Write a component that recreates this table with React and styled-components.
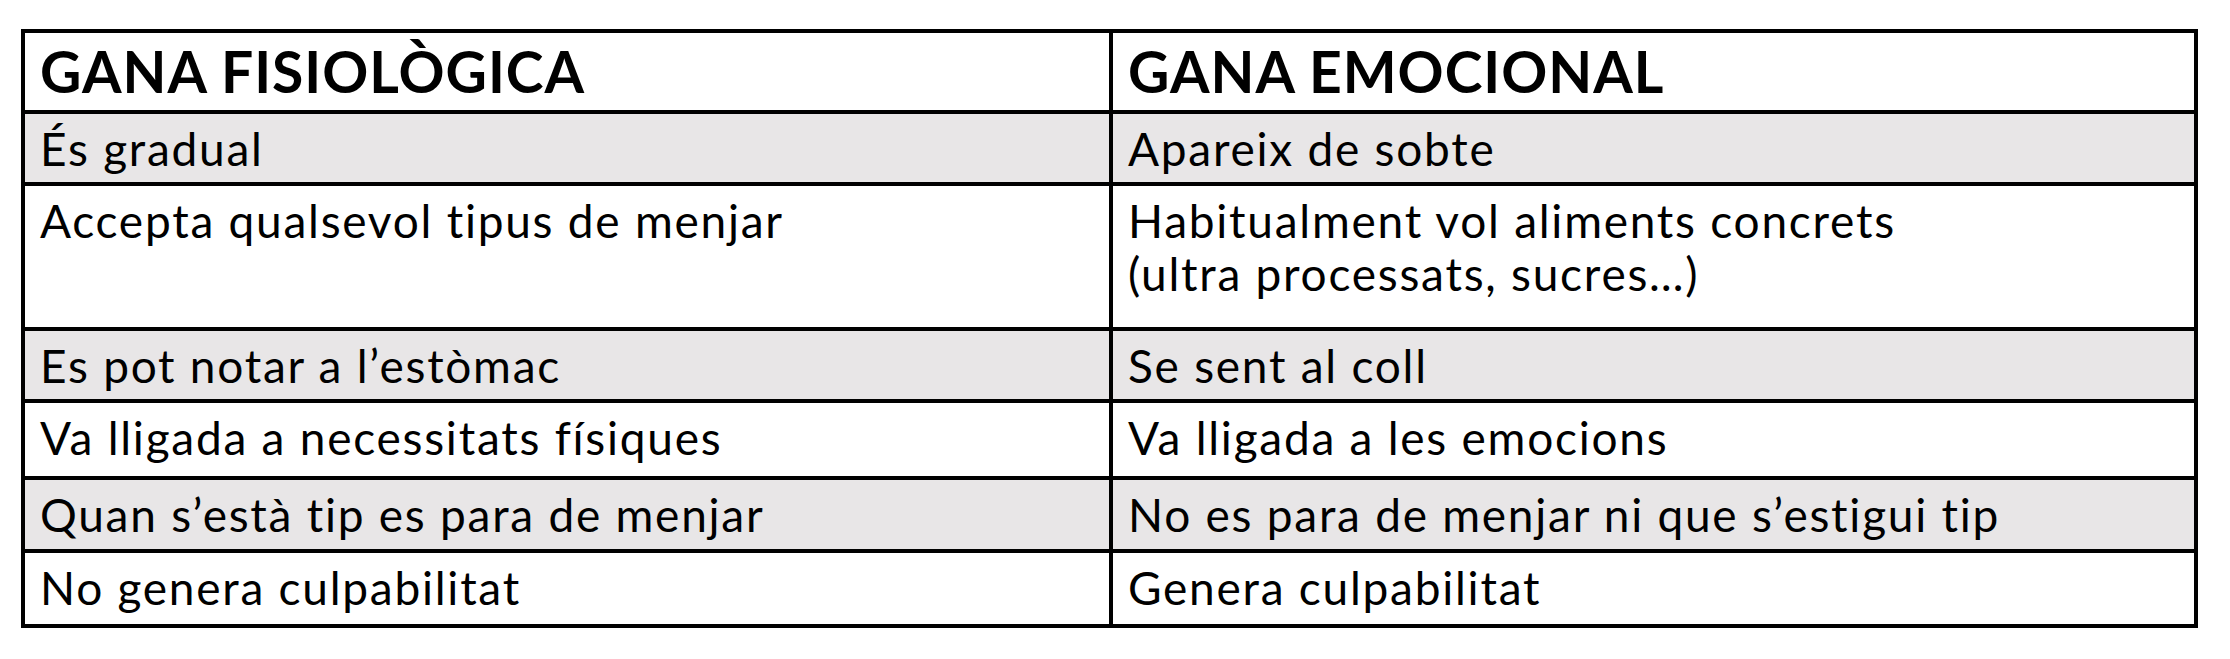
import React from 'react';
import styled, { createGlobalStyle } from 'styled-components';

const GlobalStyle = createGlobalStyle`
  html, body {
    margin: 0;
    padding: 0;
    background: #ffffff;
  }
  body {
    font-family: Lato, "Noto Sans", "Liberation Sans", sans-serif;
    color: #000000;
  }
`;

const Page = styled.div`
  box-sizing: border-box;
  width: 2230px;
  height: 659px;
  padding: 29px 0 0 21px;
`;

const Table = styled.div`
  box-sizing: border-box;
  display: flex;
  flex-direction: column;
  gap: 4px;
  width: 2177px;
  padding: 4px;
  background: #000000;
`;

const Row = styled.div`
  display: grid;
  grid-template-columns: 1084px 1081px;
  gap: 4px;
  height: ${(p) => p.$h}px;
`;

const Cell = styled.div`
  box-sizing: border-box;
  background: ${(p) => (p.$shade ? '#e8e6e7' : '#ffffff')};
  padding: 8px 0 0 15px;
  font-size: 46px;
  line-height: 53px;
  font-weight: 400;
  letter-spacing: 1.75px;
  white-space: nowrap;
`;

const HeadCell = styled(Cell)`
  padding-top: 4px;
  font-size: 57px;
  line-height: 68px;
  font-weight: 700;
  letter-spacing: 1px;
`;

const rows = [
  { h: 68, shade: true, a: ['És gradual'], b: ['Apareix de sobte'] },
  {
    h: 141,
    shade: false,
    a: ['Accepta qualsevol tipus de menjar'],
    b: ['Habitualment vol aliments concrets', '(ultra processats, sucres…)'],
  },
  { h: 68, shade: true, a: ['Es pot notar a l’estòmac'], b: ['Se sent al coll'] },
  { h: 73, shade: false, a: ['Va lligada a necessitats físiques'], b: ['Va lligada a les emocions'] },
  {
    h: 69,
    shade: true,
    a: ['Quan s’està tip es para de menjar'],
    b: ['No es para de menjar ni que s’estigui tip'],
  },
  { h: 71, shade: false, a: ['No genera culpabilitat'], b: ['Genera culpabilitat'] },
];

const Lines = ({ lines }) =>
  lines.map((l, i) => (
    <React.Fragment key={i}>
      {i > 0 && <br />}
      {l}
    </React.Fragment>
  ));

export default function App() {
  return (
    <Page>
      <GlobalStyle />
      <Table>
        <Row $h={77}>
          <HeadCell>GANA FISIOLÒGICA</HeadCell>
          <HeadCell>GANA EMOCIONAL</HeadCell>
        </Row>
        {rows.map((r, i) => (
          <Row key={i} $h={r.h}>
            <Cell $shade={r.shade}>
              <Lines lines={r.a} />
            </Cell>
            <Cell $shade={r.shade}>
              <Lines lines={r.b} />
            </Cell>
          </Row>
        ))}
      </Table>
    </Page>
  );
}
